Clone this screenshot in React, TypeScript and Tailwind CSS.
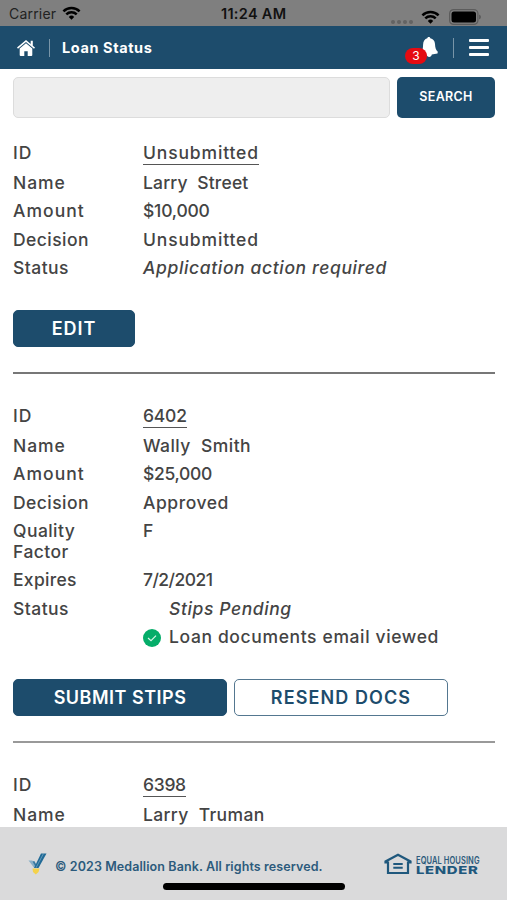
import clsx from "clsx";
import type { ReactNode } from "react";

function Wifi({ className }: { className?: string }) {
  return (
    <svg viewBox="0 0 18 14" className={className} fill="none" stroke="#000" strokeWidth="2.5">
      <path d="M0.9 5.3a11.5 11.5 0 0 1 16.2 0" />
      <path d="M3.8 8.4a7.4 7.4 0 0 1 10.4 0" />
      <path d="M9 13.8l-2.7-2.9a3.8 3.8 0 0 1 5.4 0z" fill="#000" stroke="none" />
    </svg>
  );
}

function StatusBar() {
  return (
    <div className="relative flex h-[26px] shrink-0 items-center justify-between bg-[#7f7f7f] pl-[9px] text-[#111]">
      <div className="flex items-center gap-[6px]">
        <span className="pt-[2px] text-[14px] leading-[24px] tracking-[0.2px] text-[#222]">Carrier</span>
        <Wifi className="h-[14px] w-[19px]" />
      </div>
      <span className="absolute left-[221px] top-[2px] whitespace-nowrap text-[14.5px] font-semibold leading-[24px] tracking-[0.3px]">11:24 AM</span>
      <div className="flex h-full items-start pr-[26px]">
        <div className="mt-[20px] flex gap-[2px]">
          {[0, 1, 2, 3].map((i) => (
            <span key={i} className="size-[4px] rounded-full bg-[#636363]" />
          ))}
        </div>
        <Wifi className="ml-[8px] mt-[10px] h-[14px] w-[19px]" />
        <svg viewBox="0 0 32 16" className="ml-[9px] mt-[9px] h-[16px] w-[32px]">
          <rect x="0.6" y="0.6" width="28.3" height="14.8" rx="4" fill="none" stroke="#5c5c5c" strokeWidth="1.2" />
          <rect x="2.5" y="2.5" width="24.5" height="11" rx="2.5" fill="#000" />
          <path d="M30 5.5q2 .7 2 2.5t-2 2.5z" fill="#5c5c5c" />
        </svg>
      </div>
    </div>
  );
}

function Header() {
  return (
    <header className="flex h-[43px] shrink-0 items-center bg-[#1d4c6c] pl-[17px] pr-[18px] text-white">
      <svg viewBox="0 0 18 16" className="h-[16px] w-[18px]" fill="#fff">
        <path d="M9 0 0 7.6l1 1.2L9 2.1l8 6.7 1-1.2-2.2-1.9V.8h-2.1v3.1z" />
        <path d="M9 3.3 2.7 8.6V15q0 1 1 1h3.6v-4.7h3.4V16h3.6q1 0 1-1V8.6z" />
      </svg>
      <span className="ml-[14px] h-[18px] w-px bg-[#7895a8]" />
      <h1 className="ml-[12px] whitespace-nowrap text-[14.5px] font-bold tracking-[0.6px]">Loan Status</h1>
      <div className="relative ml-auto h-[20px] w-[34px]">
        <svg viewBox="0 0 18 20" className="absolute -top-px right-0 h-[20px] w-[18px]" fill="#fff">
          <path d="M8.800 0c.8 0 1.300.4 1.500 1.300 2.900.7 4.500 2.600 4.700 5.700.2 3.800.7 5.500 2.800 7.800l-.3 1.700-5.700.9c-.2 1.600-1.300 2.500-2.600 2.500s-2.400-.9-2.600-2.300H1L.6 16c2-2 2.400-4.200 2.500-8.500.1-3.200 1.500-5.400 4.200-6.200C7.500.4 8 0 8.800 0z" />
        </svg>
        <span className="absolute left-[1px] top-[10px] flex h-[16px] w-[22px] items-center justify-center rounded-full bg-[#e50b12] text-[12px] leading-none">3</span>
      </div>
      <span className="ml-[15px] h-[20px] w-px bg-[#7895a8]" />
      <div className="ml-[15px] flex w-[20px] flex-col gap-[4px]">
        <span className="h-[3px] rounded-[1px] bg-white" />
        <span className="h-[3px] rounded-[1px] bg-white" />
        <span className="h-[3px] rounded-[1px] bg-white" />
      </div>
    </header>
  );
}

function Row({ label, track = "tracking-[0.45px]", children }: { label: string; track?: string; children: ReactNode }) {
  return (
    <div className="mb-[7.6px] flex leading-[20.9px]">
      <div className={clsx("w-[90px]", track)}>{label}</div>
      <div className="ml-[40px] whitespace-pre">{children}</div>
    </div>
  );
}

function LoanId({ children, className }: { children: string; className?: string }) {
  return <a className={clsx("block border-b border-[#555]", className)}>{children}</a>;
}

function Button({ children, className, outline }: { children: string; className: string; outline?: boolean }) {
  return (
    <button
      className={clsx(
        "h-[37px] whitespace-nowrap rounded-[5px] border text-[18px] font-semibold",
        outline ? "border-[#547790] bg-white text-[#1d4c6c]" : "border-[#1d4c6c] bg-[#1d4c6c] text-white",
        className
      )}
    >
      {children}
    </button>
  );
}

function CheckMark() {
  return (
    <svg viewBox="0 0 18 18" className="mr-[8px] size-[18px]">
      <circle cx="9" cy="9" r="9" fill="#05ad69" />
      <path d="M5 9l3 2.700 5-5" fill="none" stroke="#d9f5e8" strokeWidth="1.200" />
    </svg>
  );
}

function Footer() {
  return (
    <footer className="relative flex h-[73px] shrink-0 items-start bg-[#dadadb] pl-[28px] text-[#2c5a7c]">
      <svg viewBox="0 0 19 22" className="mt-[26px] h-[22px] w-[19px]">
        <path d="M.5 7.5h3.8l3.2 5.5-1.2 2z" fill="#8ab0c8" />
        <path d="M4.5 8.5l1.8-.5 2 3.5-1 2z" fill="#3a7ba3" />
        <path d="M13 .5h5.5L10.5 15H6z" fill="#216a96" />
        <path d="M15.5.5 8 14.8" stroke="#8db8d1" strokeWidth=".6" />
        <path d="M4.500 15.500h7l-1 3.500-2.700 2.500L5 19z" fill="#f4d24b" />
      </svg>
      <p className="ml-[8px] mt-[31px] whitespace-nowrap text-[12.5px] font-semibold leading-[17px] tracking-[0.1px]">
        © 2023 Medallion Bank. All rights reserved.
      </p>
      <div className="ml-auto mr-[26px] mt-[26px] flex">
        <svg viewBox="0 0 28 22" className="h-[22px] w-[28px]" fill="none" stroke="#1f587d">
          <path d="M4 20V9.500L1.500 9.500v-1L14 1.700l12.500 6.800v1H24V20z" strokeWidth="2.200" />
          <path d="M9.300 11h9.400M9.300 14.700h9.400" strokeWidth="2" />
        </svg>
        <div className="ml-[4px] flex w-[65px] flex-col pt-[3px]">
          <span className="w-[90px] origin-left scale-x-[0.75] whitespace-nowrap text-[10px] font-semibold leading-[9px] tracking-[0.12px]">EQUAL HOUSING</span>
          <span className="mt-[1px] w-[54px] origin-left scale-x-[1.35] whitespace-nowrap text-[11px] font-extrabold leading-[9px] tracking-[0.5px] text-[#1f587d]">LENDER</span>
        </div>
      </div>
      <div className="absolute bottom-[10px] left-[163px] h-[7px] w-[182px] rounded-full bg-black" />
    </footer>
  );
}

export default function App() {
  return (
    <div className="flex h-[900px] w-[507px] flex-col overflow-hidden bg-white font-['Inter','Liberation_Sans',sans-serif]">
      <StatusBar />
      <Header />

      <main className="min-h-0 flex-1 overflow-hidden pl-[13px] pr-[12px] pt-[8px] text-[17.5px] font-medium text-[#444]">
        {/* SEARCH */}
        <div className="flex gap-[7px]">
          <input className="h-[41px] w-[377px] rounded-[5px] border border-[#dcdcdc] bg-[#eee]" />
          <button className="h-[41px] w-[98px] rounded-[5px] bg-[#1d4c6c] text-[12.5px] font-semibold tracking-[0.3px] text-white">SEARCH</button>
        </div>

        <section className="pt-[25px]">
          <Row label="ID" track="tracking-[0.9px]"><LoanId className="tracking-[0.85px]">Unsubmitted</LoanId></Row>
          <Row label="Name" track="tracking-[0.95px]"><span className="tracking-[0.15px]">Larry  Street</span></Row>
          <Row label="Amount" track="tracking-[1.05px]"><span className="tracking-[-0.2px]">$10,000</span></Row>
          <Row label="Decision"><span className="tracking-[0.85px]">Unsubmitted</span></Row>
          <Row label="Status"><i className="tracking-[0.63px]">Application action required</i></Row>
          <div className="flex pt-[23.5px]">
            <Button className="w-[122px] tracking-[0.9px]">EDIT</Button>
          </div>
        </section>

        <hr className="mt-[24.5px] border-t-2 border-[#777]" />

        <section className="pt-[32.5px]">
          <Row label="ID" track="tracking-[0.9px]"><LoanId className="tracking-[-0.2px]">6402</LoanId></Row>
          <Row label="Name" track="tracking-[0.95px]"><span className="tracking-[0.45px]">Wally  Smith</span></Row>
          <Row label="Amount" track="tracking-[1.05px]"><span className="tracking-[-0.3px]">$25,000</span></Row>
          <Row label="Decision"><span className="tracking-[0.55px]">Approved</span></Row>
          <Row label="Quality Factor">F</Row>
          <Row label="Expires" track="tracking-[0.3px]"><span className="tracking-[-0.55px]">7/2/2021</span></Row>
          <Row label="Status">
            <i className="block pl-[26px] tracking-[0.6px]">Stips Pending</i>
            <div className="mt-[7.6px] flex items-center tracking-[0.63px]"><CheckMark />Loan documents email viewed</div>
          </Row>
          <div className="flex gap-[7px] pt-[23.5px]">
            <Button className="w-[214px] tracking-[0.5px]">SUBMIT STIPS</Button>
            <Button outline className="w-[214px] tracking-[1.1px]">RESEND DOCS</Button>
          </div>
        </section>

        <hr className="mt-[24.5px] border-t-2 border-[#999]" />

        <section className="pt-[32.5px]">
          <Row label="ID" track="tracking-[0.9px]"><LoanId className="tracking-[-0.3px]">6398</LoanId></Row>
          <Row label="Name" track="tracking-[0.95px]"><span className="tracking-[0.35px]">Larry  Truman</span></Row>
        </section>
      </main>

      <Footer />
    </div>
  );
}
